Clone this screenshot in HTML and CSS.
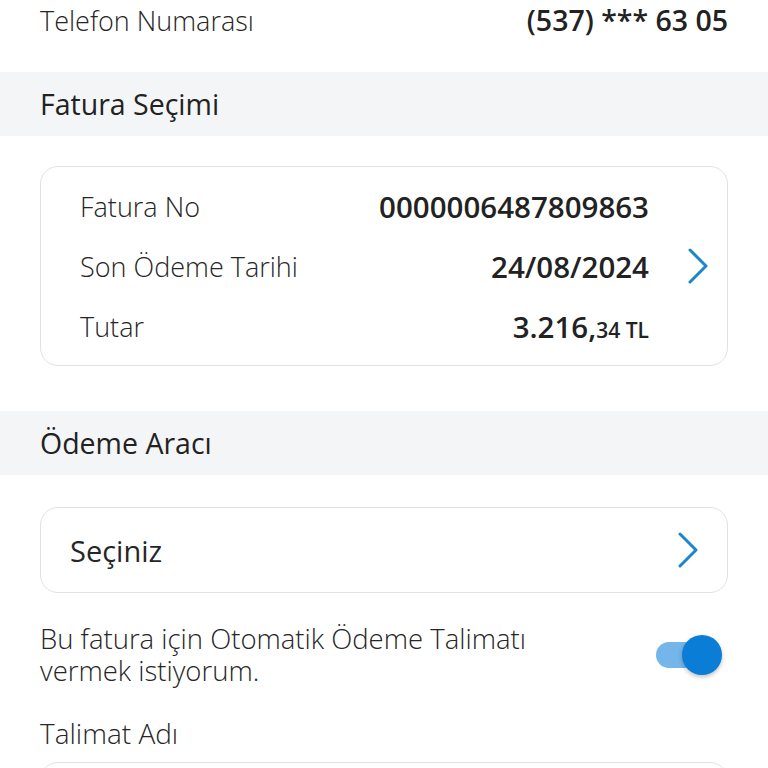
FILE: index.html
```html
<!DOCTYPE html>
<html lang="tr">
<head>
  <meta charset="UTF-8">
  <meta name="viewport" content="width=device-width, initial-scale=1.0">
  <link rel="stylesheet" href="styles.css">
  <title>Fatura Ödeme</title>
</head>
<body>
  <div class="info-row">
    <span class="label">Telefon Numarası</span>
    <span class="value">(537) *** 63 05</span>
  </div>

  <div class="section-head">Fatura Seçimi</div>

  <div class="bill-card">
    <div class="bill-rows">
      <div class="bill-row">
        <span class="label">Fatura No</span>
        <span class="value">0000006487809863</span>
      </div>
      <div class="bill-row">
        <span class="label">Son Ödeme Tarihi</span>
        <span class="value">24/08/2024</span>
      </div>
      <div class="bill-row">
        <span class="label">Tutar</span>
        <span class="value">3.216,<small>34 TL</small></span>
      </div>
    </div>
    <svg class="chevron" width="22" height="36" viewBox="0 0 22 36">
      <polyline points="3,2 19,18 3,34" fill="none" stroke="#1a86d0" stroke-width="3" stroke-linecap="round" stroke-linejoin="round"/>
    </svg>
  </div>

  <div class="section-head">Ödeme Aracı</div>

  <div class="select-box">
    <span>Seçiniz</span>
    <svg class="chevron" width="22" height="36" viewBox="0 0 22 36">
      <polyline points="3,2 19,18 3,34" fill="none" stroke="#1a86d0" stroke-width="3" stroke-linecap="round" stroke-linejoin="round"/>
    </svg>
  </div>

  <div class="toggle-row">
    <p>Bu fatura için Otomatik Ödeme Talimatı<br>vermek istiyorum.</p>
    <div class="switch">
      <div class="switch-track"></div>
      <div class="switch-thumb"></div>
    </div>
  </div>

  <div class="field-label">Talimat Adı</div>
  <div class="text-input"></div>
</body>
</html>
```

FILE: styles.css
```css
body {
  margin: 0;
  background: #fff;
  color: #262626;
  font-family: "Open Sans", "Noto Sans", sans-serif;
  font-size: 27px;
  font-weight: 300;
  overflow: hidden;
}

.info-row {
  display: flex;
  justify-content: space-between;
  align-items: center;
  height: 40px;
  padding: 0 40px 32px;
}

.info-row .value {
  font-size: 28.5px;
}

.value {
  font-weight: 600;
  font-size: 29.5px;
  color: #222;
}

.value small {
  font-size: 21px;
}

.section-head {
  background: #f4f5f7;
  height: 64px;
  line-height: 64px;
  padding: 0 40px;
  font-size: 28.5px;
  font-weight: 400;
  color: #222;
}

.bill-card {
  display: flex;
  align-items: center;
  margin: 30px 40px 45px;
  padding: 9px 18px 9px 39px;
  border: 1px solid #dfe2e6;
  border-radius: 18px;
}

.bill-rows {
  flex: 1;
  margin-right: 38px;
}

.bill-row {
  display: flex;
  justify-content: space-between;
  align-items: center;
  height: 60px;
}

.select-box {
  display: flex;
  justify-content: space-between;
  align-items: center;
  height: 84px;
  margin: 32px 40px 30px;
  padding: 0 28px 0 29px;
  border: 1px solid #dfe2e6;
  border-radius: 18px;
  font-size: 29px;
  font-weight: 400;
}

.toggle-row {
  display: flex;
  justify-content: space-between;
  align-items: center;
  padding: 0 46px 0 40px;
}

.toggle-row p {
  margin: 0;
  line-height: 32px;
  font-size: 27.5px;
}

.switch {
  position: relative;
  width: 66px;
  height: 40px;
}

.switch-track {
  position: absolute;
  left: 0;
  top: 7px;
  width: 50px;
  height: 26px;
  border-radius: 13px;
  background: #74b6ea;
}

.switch-thumb {
  position: absolute;
  right: 0;
  top: 0;
  width: 40px;
  height: 40px;
  border-radius: 50%;
  background: #0a7dd6;
  box-shadow: 0 2px 4px rgba(0, 0, 0, 0.25);
}

.field-label {
  margin-top: 30px;
  padding: 0 40px;
  line-height: 32px;
  font-size: 28px;
}

.text-input {
  margin: 13px 40px 0;
  height: 80px;
  border: 1px solid #dfe2e6;
  border-radius: 18px;
}
```
